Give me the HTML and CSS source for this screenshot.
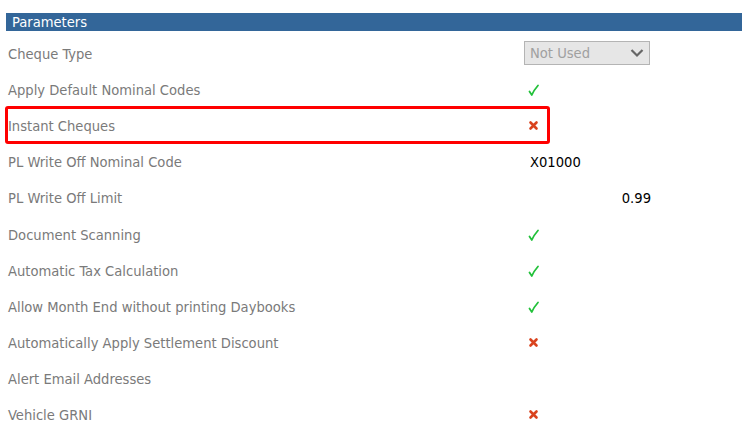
FILE: index.html
```html
<!DOCTYPE html>
<html>
<head>
<meta charset="utf-8">
<link rel="stylesheet" href="styles.css">
</head>
<body>
<div class="panel">
  <div class="header">Parameters</div>
  <div class="rows">
    <div class="row"><div class="label">Cheque Type</div><div class="value"><div class="select"><span>Not Used</span><svg class="chev" width="14" height="10" viewBox="0 0 14 10"><path d="M1.5 2 L7 7.5 L12.5 2" fill="none" stroke="#666" stroke-width="2.2"/></svg></div></div></div>
    <div class="row"><div class="label">Apply Default Nominal Codes</div><div class="value"><svg class="tick" width="12" height="14" viewBox="0 0 12 14"><path d="M1.5 8.5 L3.8 12 Q6 7 10 2.5" fill="none" stroke="#22c13a" stroke-width="1.8" stroke-linecap="round" stroke-linejoin="round"/></svg></div></div>
    <div class="row marked"><div class="label">Instant Cheques</div><div class="value"><svg class="cross" width="11" height="11" viewBox="0 0 11 11"><path d="M2.5 2.5 L8.5 8.5 M8.5 2.5 L2.5 8.5" fill="none" stroke="#d9431e" stroke-width="2.6" stroke-linecap="round"/></svg></div><div class="highlight"></div></div>
    <div class="row"><div class="label">PL Write Off Nominal Code</div><div class="value text">X01000</div></div>
    <div class="row"><div class="label">PL Write Off Limit</div><div class="value text num">0.99</div></div>
    <div class="row"><div class="label">Document Scanning</div><div class="value"><svg class="tick" width="12" height="14" viewBox="0 0 12 14"><path d="M1.5 8.5 L3.8 12 Q6 7 10 2.5" fill="none" stroke="#22c13a" stroke-width="1.8" stroke-linecap="round" stroke-linejoin="round"/></svg></div></div>
    <div class="row"><div class="label">Automatic Tax Calculation</div><div class="value"><svg class="tick" width="12" height="14" viewBox="0 0 12 14"><path d="M1.5 8.5 L3.8 12 Q6 7 10 2.5" fill="none" stroke="#22c13a" stroke-width="1.8" stroke-linecap="round" stroke-linejoin="round"/></svg></div></div>
    <div class="row"><div class="label">Allow Month End without printing Daybooks</div><div class="value"><svg class="tick" width="12" height="14" viewBox="0 0 12 14"><path d="M1.5 8.5 L3.8 12 Q6 7 10 2.5" fill="none" stroke="#22c13a" stroke-width="1.8" stroke-linecap="round" stroke-linejoin="round"/></svg></div></div>
    <div class="row"><div class="label">Automatically Apply Settlement Discount</div><div class="value"><svg class="cross" width="11" height="11" viewBox="0 0 11 11"><path d="M2.5 2.5 L8.5 8.5 M8.5 2.5 L2.5 8.5" fill="none" stroke="#d9431e" stroke-width="2.6" stroke-linecap="round"/></svg></div></div>
    <div class="row"><div class="label">Alert Email Addresses</div><div class="value"></div></div>
    <div class="row"><div class="label">Vehicle GRNI</div><div class="value"><svg class="cross" width="11" height="11" viewBox="0 0 11 11"><path d="M2.5 2.5 L8.5 8.5 M8.5 2.5 L2.5 8.5" fill="none" stroke="#d9431e" stroke-width="2.6" stroke-linecap="round"/></svg></div></div>
  </div>
</div>
</body>
</html>
```
FILE: styles.css
```css
html, body {
  margin: 0;
  padding: 0;
  background: #ffffff;
}
body {
  font-family: "DejaVu Sans Condensed", "DejaVu Sans", sans-serif;
  font-size: 14.6px;
}
.panel {
  margin: 13px 0 0 6px;
}
.header {
  height: 18px;
  line-height: 18px;
  background: #336699;
  color: #ffffff;
  padding-left: 6px;
  font-size: 14.6px;
}
.rows {
  padding-top: 4px;
}
.row {
  position: relative;
  display: flex;
  align-items: center;
  height: 36.2px;
  padding-left: 2px;
}
.label {
  width: 516px;
  color: #7a7a7a;
}
.value {
  width: 127px;
  display: flex;
  align-items: center;
  color: #000000;
}
.value.text {
  padding-left: 6px;
}
.value.num {
  justify-content: flex-end;
  padding-left: 0;
}
.tick {
  margin-left: 4px;
  margin-top: 2px;
}
.cross {
  margin-left: 4px;
}
.select {
  box-sizing: border-box;
  width: 126px;
  height: 24px;
  margin-top: -1px;
  border: 1px solid #b4b4b4;
  background: #e6e6e6;
  color: #a0a0a0;
  display: flex;
  align-items: center;
  justify-content: space-between;
  padding: 0 5px 0 5px;
}
.chev {
  display: block;
}
.highlight {
  position: absolute;
  left: -1px;
  top: -1px;
  width: 545px;
  height: 38px;
  box-sizing: border-box;
  border: 3px solid #ff0000;
  border-radius: 3px;
  pointer-events: none;
}
```
